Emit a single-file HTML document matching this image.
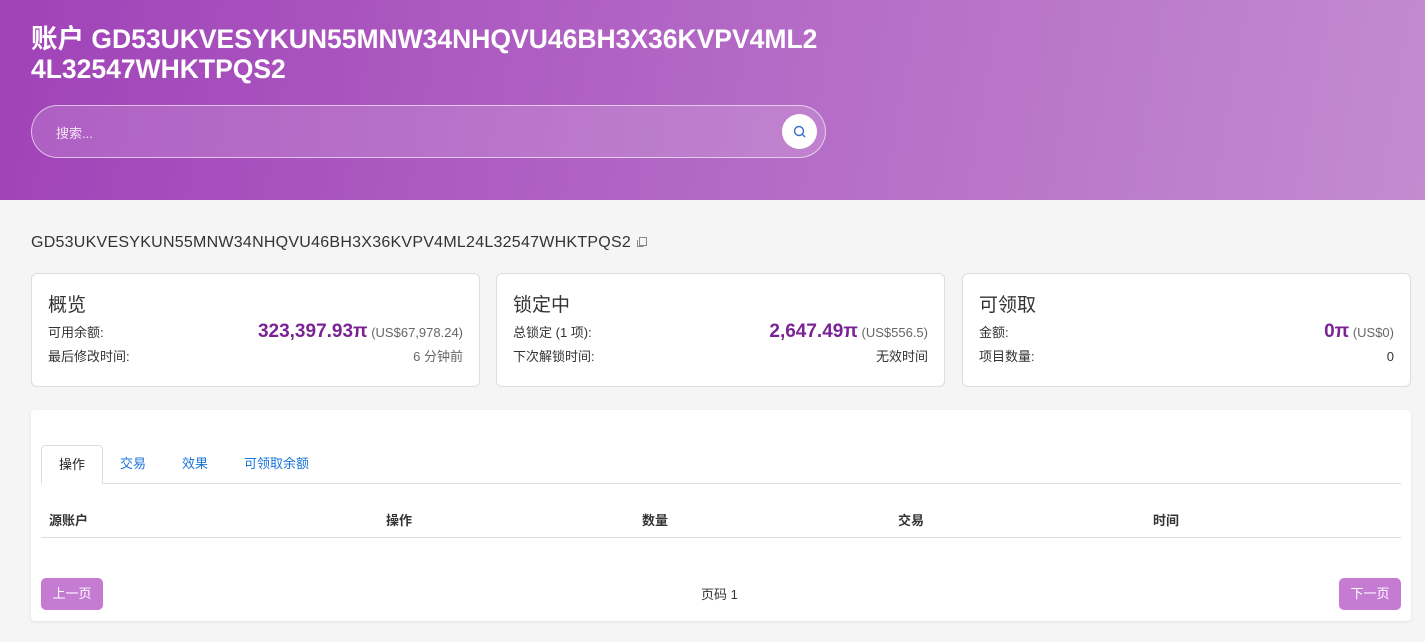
<!DOCTYPE html>
<html><head><meta charset="utf-8"><style>
*{box-sizing:border-box;margin:0;padding:0}
body{width:1425px;height:642px;overflow:hidden;background:#f5f5f5;font-family:"Liberation Sans","Noto Sans CJK SC",sans-serif;color:#333}
.hd{height:200px;background:linear-gradient(100deg,#a042b8 0%,#b164c4 45%,#c38bd0 100%);position:relative}
.hd h1{position:absolute;left:31px;top:24px;width:850px;color:#fff;font-size:26.5px;line-height:30px;font-weight:bold}
.sr{position:absolute;left:31px;top:105px;width:795px;height:53px;border-radius:27px;border:1px solid rgba(255,255,255,.6);background:rgba(255,255,255,.15)}
.sr span{position:absolute;left:24px;top:17px;color:#f3e6f6;font-size:13px}
.sr .b{position:absolute;right:8px;top:8px;width:35px;height:35px;border-radius:50%;background:#fff}
.acc{position:absolute;left:31px;top:234px;font-size:16px;letter-spacing:0.25px;color:#333}
.card{position:absolute;top:273px;width:449px;height:114px;background:#fff;border:1px solid #ddd;border-radius:6px;padding:0 16px}
.card h2{font-weight:normal;font-size:19px;margin-top:16px;height:26px;color:#333}
.row{display:flex;justify-content:space-between;align-items:baseline;font-size:13px;margin-top:5px;height:20px}
.row .r{color:#666}
.big{color:#7b2394;font-weight:bold;font-size:19px}
.main{position:absolute;left:31px;top:410px;width:1380px;height:211px;background:#fff;border-radius:4px;box-shadow:0 1px 3px rgba(0,0,0,.08)}
.tabs{position:absolute;left:10px;top:35px;width:1360px;height:39px;border-bottom:1px solid #ddd}
.tab{position:absolute;top:0;height:39px;line-height:38px;font-size:13px;color:#1a73d9}
.tab.a{left:0;width:62px;text-align:center;color:#222;border:1px solid #ddd;border-bottom:1px solid #fff;border-radius:4px 4px 0 0;background:#fff}
.th{position:absolute;top:100px;font-size:13px;font-weight:bold;color:#333}
.line{position:absolute;left:10px;top:127px;width:1360px;border-top:1px solid #ddd}
.btn{position:absolute;top:168px;width:62px;height:32px;border-radius:5px;background:#c57bd2;color:#fff;font-size:13px;text-align:center;line-height:32px}
</style></head><body>
<div class="hd">
<h1>账户 GD53UKVESYKUN55MNW34NHQVU46BH3X36KVPV4ML2<br>4L32547WHKTPQS2</h1>
<div class="sr"><span>搜索...</span><div class="b"><svg width="35" height="35" viewBox="0 0 35 35"><circle cx="17" cy="17" r="4.5" fill="none" stroke="#3a6fc4" stroke-width="1.4"/><line x1="20.3" y1="20.3" x2="23" y2="23" stroke="#3a6fc4" stroke-width="1.4"/></svg></div></div>
</div>
<div class="acc">GD53UKVESYKUN55MNW34NHQVU46BH3X36KVPV4ML24L32547WHKTPQS2 <svg width="12" height="12" viewBox="0 0 12 12" style="vertical-align:-1px"><rect x="3.5" y="1.5" width="7" height="8" fill="none" stroke="#888"/><path d="M1.5 4v6.5h6" fill="none" stroke="#888"/></svg></div>
<div class="card" style="left:31px"><h2>概览</h2>
<div class="row"><span>可用余额:</span><span><span class="big">323,397.93π</span> <span class="r">(US$67,978.24)</span></span></div>
<div class="row"><span>最后修改时间:</span><span class="r">6 分钟前</span></div></div>
<div class="card" style="left:496px"><h2>锁定中</h2>
<div class="row"><span>总锁定 (1 项):</span><span><span class="big">2,647.49π</span> <span class="r">(US$556.5)</span></span></div>
<div class="row"><span>下次解锁时间:</span><span>无效时间</span></div></div>
<div class="card" style="left:962px"><h2>可领取</h2>
<div class="row"><span>金额:</span><span><span class="big">0π</span> <span class="r">(US$0)</span></span></div>
<div class="row"><span>项目数量:</span><span>0</span></div></div>
<div class="main">
<div class="tabs"><div class="tab a">操作</div><div class="tab" style="left:79px">交易</div><div class="tab" style="left:141px">效果</div><div class="tab" style="left:203px">可领取余额</div></div>
<div class="th" style="left:18px">源账户</div><div class="th" style="left:355px">操作</div><div class="th" style="left:611px">数量</div><div class="th" style="left:867px">交易</div><div class="th" style="left:1122px">时间</div>
<div class="line"></div>
<div class="btn" style="left:10px">上一页</div>
<div style="position:absolute;left:670px;top:174px;font-size:13px">页码 1</div>
<div class="btn" style="left:1308px">下一页</div>
</div>
</body></html>
